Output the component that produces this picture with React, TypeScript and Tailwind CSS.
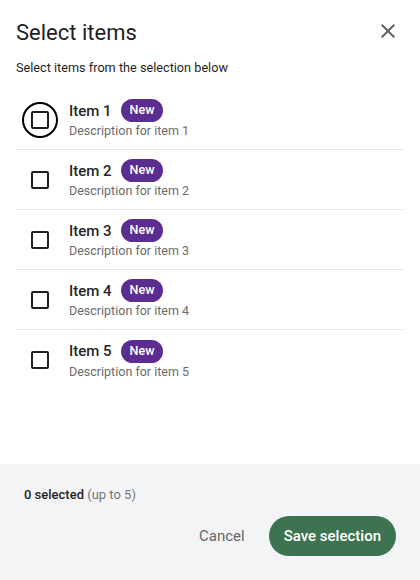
import { useState } from 'react';

const items = [1, 2, 3, 4, 5].map((n) => ({
  id: n,
  title: `Item ${n}`,
  description: `Description for item ${n}`,
}));

export default function App() {
  const [selected, setSelected] = useState<number[]>([]);

  const toggle = (id: number) =>
    setSelected((s) => (s.includes(id) ? s.filter((x) => x !== id) : [...s, id]));

  return (
    <div
      className="w-[420px] h-[580px] bg-white flex flex-col text-[#1f1f1f]"
      style={{ fontFamily: 'Roboto, "Noto Sans", sans-serif' }}
    >
      <div className="flex-1 px-4">
        <div className="flex items-center justify-between h-[28px] mt-[19px]">
          <h1 className="text-[22px] leading-[28px]">Select items</h1>
          <button className="w-[24px] h-[24px] mr-[4px] mt-[-4px] text-[#5f6368]">
            <svg viewBox="0 0 24 24" width="24" height="24" fill="currentColor">
              <path d="M19 6.41L17.59 5 12 10.59 6.41 5 5 6.41 10.59 12 5 17.59 6.41 19 12 13.41 17.59 19 19 17.59 13.41 12z" />
            </svg>
          </button>
        </div>
        <p className="text-[12.7px] leading-[18px] mt-[12px]">Select items from the selection below</p>
        <ul className="mt-[13px]">
          {items.map((item, i) => (
            <li
              key={item.id}
              className={`h-[60px] flex items-center ${i < items.length - 1 ? 'border-b border-[#e5e5e5]' : ''}`}
              onClick={() => toggle(item.id)}
            >
              <div className="w-[48px] mr-[5px] flex items-center justify-center">
                <div
                  className={`w-[36px] h-[36px] rounded-full flex items-center justify-center ${i === 0 ? 'border-2 border-black' : ''}`}
                >
                  <div className="w-[18px] h-[18px] rounded-[2px] border-2 border-[#1f1f1f] bg-white" />
                </div>
              </div>
              <div className="flex flex-col">
                <div className="flex items-center gap-[9px]">
                  <span className="text-[15px] leading-[22px] font-medium text-[#262626]">{item.title}</span>
                  <span className="h-[23px] px-[9px] rounded-full bg-[#5b2d90] text-white text-[12.5px] font-medium flex items-center">
                    New
                  </span>
                </div>
                <span className="text-[12.5px] leading-[18px] text-[#6b6b6b]">{item.description}</span>
              </div>
            </li>
          ))}
        </ul>
      </div>
      <div className="h-[116px] bg-[#f3f4f6] px-[24px] pt-[22px] flex flex-col">
        <p className="text-[13px] leading-[18px]">
          <span className="font-medium">{selected.length} selected</span>{' '}
          <span className="text-[#757575]">(up to 5)</span>
        </p>
        <div className="flex justify-end items-center mt-[12px] gap-[24px]">
          <button className="text-[15px] text-[#666666]">Cancel</button>
          <button className="h-[40px] px-[15px] rounded-full bg-[#3d7350] text-white text-[15px] font-medium">
            Save selection
          </button>
        </div>
      </div>
    </div>
  );
}
